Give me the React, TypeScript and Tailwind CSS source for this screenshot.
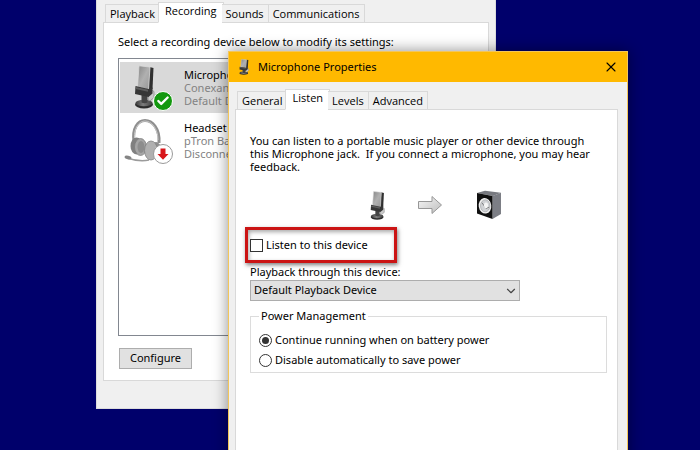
import { useState } from 'react';
import clsx from 'clsx';
import { Check, ChevronDown, X } from 'lucide-react';

interface TabsProps {
  items: string[];
  active: string;
}

interface Device {
  name: string;
  driver: string;
  status: string;
  icon: React.ReactNode;
}

const MicIcon = ({ className }: { className?: string }) => (
  <svg viewBox="0 0 21 44" preserveAspectRatio="none" className={className} aria-hidden="true">
    <defs>
      <linearGradient id="micHead" x1="0" y1="0" x2="1" y2="1">
        <stop offset="0" stopColor="#858585" />
        <stop offset="0.5" stopColor="#b0b0b0" />
        <stop offset="1" stopColor="#969696" />
      </linearGradient>
      <linearGradient id="micBase" x1="0" y1="0" x2="1" y2="0">
        <stop offset="0" stopColor="#3b3b3b" />
        <stop offset="0.45" stopColor="#7d7d7d" />
        <stop offset="1" stopColor="#3f3f3f" />
      </linearGradient>
    </defs>
    <ellipse cx="10" cy="39.500" rx="9" ry="4" fill="#2c2c2c" />
    <ellipse cx="10" cy="38" rx="8.500" ry="3.300" fill="url(#micBase)" />
    <path d="M7.500 30h6v7.500q-3 1.500-6 0z" fill="#444" />
    <path d="M14.500 28l4-2.500 1.500 1v6l-4 3.500-2-1z" fill="#cacaca" stroke="#777" strokeWidth="0.600" />
    <path d="M15.500 2l4 1L18.500 24l-4.500 1z" fill="#303030" />
    <path d="M5 .8l11 1.200-1.500 23L3.500 22z" fill="url(#micHead)" stroke="#dcdcdc" strokeWidth="0.800" />
    <path d="M1.500 21l13 3 4-1.500v6l-4 3.500-13.500-3z" fill="#363636" />
    <path d="M2 22l12 2.800v2L1.500 24z" fill="#5c5c5c" />
  </svg>
);

const HeadsetIcon = ({ className }: { className?: string }) => (
  <svg viewBox="0 0 40 44" className={className} aria-hidden="true">
    <path d="M10 24C8 10 14 2.500 21 2.500S36 10 35 25" fill="none" stroke="#8f8f8f" strokeWidth="3" />
    <path d="M10.500 20C10 10 15 3 21 3S34 10 34 22" fill="none" stroke="#c9c9c9" strokeWidth="1" />
    <path d="M3 40c6 2 14 4 22 2" fill="none" stroke="#9b9b9b" strokeWidth="1.400" />
    <ellipse cx="4" cy="39.500" rx="3.500" ry="1.800" fill="#858585" transform="rotate(12 4 39.500)" />
    <ellipse cx="12.500" cy="28" rx="6" ry="8.500" fill="#808080" />
    <ellipse cx="16.500" cy="29" rx="6" ry="8.500" fill="#a5a5a5" stroke="#7d7d7d" strokeWidth="0.800" />
    <ellipse cx="17" cy="29" rx="3.500" ry="6" fill="#8d8d8d" />
    <ellipse cx="32" cy="32" rx="5" ry="8" fill="#8e8e8e" />
    <ellipse cx="27" cy="32.500" rx="6.500" ry="9.500" fill="#b0b0b0" stroke="#808080" strokeWidth="0.800" />
  </svg>
);

const DownArrowIcon = () => (
  <svg viewBox="0 0 12 12" className="size-3" aria-hidden="true">
    <path d="M3.500.5h5V6H11.500L6 11.800.5 6h3z" fill="#d8161b" />
  </svg>
);

const ArrowIcon = () => (
  <svg viewBox="0 0 24 20" className="h-5 w-6" aria-hidden="true">
    <defs>
      <linearGradient id="arrow" x1="0" y1="0" x2="1" y2="1">
        <stop offset="0" stopColor="#f7f7f7" />
        <stop offset="1" stopColor="#bdbdbd" />
      </linearGradient>
    </defs>
    <path d="M.5 6.500H14V1.500L23.500 10 14 18.500V13.500H.5z" fill="url(#arrow)" stroke="#979797" />
  </svg>
);

const SpeakerIcon = () => (
  <svg viewBox="0 0 26 30" className="h-[30px] w-[26px]" aria-hidden="true">
    <path d="M1 3L9 .8l16 2-8 3.200z" fill="#77797f" />
    <path d="M16.500 6l8.500-3.200V24l-8.500 5z" fill="#7c7e85" />
    <path d="M1 3l15.500 3v23L1 23.500z" fill="#101010" />
    <ellipse cx="9" cy="15.800" rx="6.300" ry="7.800" fill="#f0f0f0" transform="rotate(-8 9 15.800)" />
    <ellipse cx="9.200" cy="15.800" rx="4.700" ry="6" fill="#d0d2d5" stroke="#9a9c9f" strokeWidth="0.600" />
    <path d="M6 12.800l4 5.500 3-1" fill="none" stroke="#777" strokeWidth="0.900" />
    <ellipse cx="10" cy="15.300" rx="2" ry="2.800" fill="#f5f5f5" />
  </svg>
);

const Tabs = ({ items, active }: TabsProps) => (
  <div role="tablist" className="relative z-10 -mb-px flex items-end px-0.5 font-['Open_Sans',sans-serif]">
    {items.map((item) => (
      <button
        key={item}
        role="tab"
        aria-selected={item === active}
        className={clsx(
          'border border-[#d9d9d9] leading-4',
          item === active
            ? '-mx-0.5 h-[21px] border-b-white bg-white px-1.5 pb-1'
            : 'h-[19px] border-l-0 bg-[#f0f0f0] px-1 first:border-l',
        )}
      >
        {item}
      </button>
    ))}
  </div>
);

const devices: Device[] = [
  {
    name: 'Microphone',
    driver: 'Conexant',
    status: 'Default Device',
    icon: (
      <>
        <MicIcon className="h-11 w-[21px]" />
        <span className="absolute right-0 bottom-0 flex size-5 items-center justify-center rounded-full border border-white bg-[#13980f]">
          <Check className="size-3.5 text-white" strokeWidth={4} />
        </span>
      </>
    ),
  },
  {
    name: 'Headset',
    driver: 'pTron Bass',
    status: 'Disconnected',
    icon: (
      <>
        <HeadsetIcon className="-ml-2.5 h-11 w-10" />
        <span className="absolute right-0 bottom-0 flex size-5 items-center justify-center rounded-full border border-[#9a9a9a] bg-white">
          <DownArrowIcon />
        </span>
      </>
    ),
  },
];

const SoundWindow = () => (
  <section className="absolute -top-8 left-24 flex h-[441px] w-[400px] flex-col border border-[#dcdcdc] bg-[#f0f0f0] px-1.5 pb-[27px]">
    <div className="h-[33px] shrink-0" />
    <Tabs items={['Playback', 'Recording', 'Sounds', 'Communications']} active="Recording" />
    <div className="flex flex-1 flex-col border border-[#d9d9d9] bg-white px-3.5 pt-[11px] pb-[11px]">
      <p className="leading-4">Select a recording device below to modify its settings:</p>
      <ul className="mt-2 flex-1 border border-[#828790] p-px pt-[3px]">
        {devices.map((device, i) => (
          <li
            key={device.name}
            className={clsx('mb-0.5 flex h-[51px] pt-[3px] pl-3.5', i === 0 && 'bg-[#d9d9d9]')}
          >
            <div className="relative h-[46px] w-[39px] shrink-0">{device.icon}</div>
            <div className="mt-[3px] ml-[11px] leading-[13px] text-[#838383]">
              <p className="text-black">{device.name}</p>
              <p>{device.driver}</p>
              <p>{device.status}</p>
            </div>
          </li>
        ))}
      </ul>
      <button className="mt-3 ml-px h-[21px] w-[73px] border border-[#adadad] bg-[#e1e1e1]">Configure</button>
    </div>
  </section>
);

const PropertiesWindow = () => {
  const [listen, setListen] = useState(false);
  const [power, setPower] = useState('continue');

  const powerOptions = [
    { id: 'continue', label: 'Continue running when on battery power' },
    { id: 'disable', label: 'Disable automatically to save power' },
  ];

  return (
    <section className="absolute top-[51px] -bottom-10 left-[228px] flex w-[400px] flex-col border border-[#f3c65a] bg-[#f0f0f0] shadow-[0_0_14px_rgba(0,0,0,0.45)]">
      <header className="flex h-[30px] shrink-0 items-center bg-[#ffb900] pr-2 pl-2.5">
        <MicIcon className="h-4 w-2.5" />
        <h1 className="ml-[9px] flex-1">Microphone Properties</h1>
        <button aria-label="Close">
          <X className="size-4" strokeWidth={1.600} />
        </button>
      </header>
      <div className="flex flex-1 flex-col px-1.5 pt-[7px] pr-[9px]">
        <Tabs items={['General', 'Listen', 'Levels', 'Advanced']} active="Listen" />
        <div className="flex-1 border border-[#d9d9d9] bg-white pt-6 pr-2.5 pl-3.5">
          <p className="leading-[13px]">
            You can listen to a portable music player or other device through
            <br />
            this Microphone jack.&nbsp; If you connect a microphone, you may hear
            <br />
            feedback.
          </p>
          <div className="mt-4 flex h-8 items-center pl-[120px]">
            <MicIcon className="h-[29px] w-[15px]" />
            <div className="ml-[33px]">
              <ArrowIcon />
            </div>
            <div className="ml-[34px]">
              <SpeakerIcon />
            </div>
          </div>
          <label className="mt-1.5 -ml-[5px] flex h-9 w-[152px] items-center gap-[3px] border-3 border-[#cb1414] pl-0.5 shadow-[1px_2px_4px_rgba(0,0,0,0.5),inset_1px_2px_4px_rgba(0,0,0,0.35)]">
            <input
              type="checkbox"
              checked={listen}
              onChange={(e) => setListen(e.target.checked)}
              className="size-[13px] appearance-none border border-[#333] bg-white checked:bg-[#333]"
            />
            Listen to this device
          </label>
          <label htmlFor="playback" className="block leading-[17px]">
            Playback through this device:
          </label>
          <div className="relative w-[270px]">
            <select
              id="playback"
              className="block h-[21px] w-full appearance-none border border-[#adadad] bg-[#e1e1e1] px-[3px]"
            >
              <option>Default Playback Device</option>
            </select>
            <ChevronDown className="pointer-events-none absolute top-1 right-0.5 size-3.5 text-[#444]" />
          </div>
          <fieldset className="mt-[7px] border border-[#dcdcdc] px-2 pt-1.5 pb-0.5">
            <legend className="px-0.5 leading-4">Power Management</legend>
            {powerOptions.map((option) => (
              <label key={option.id} className="flex h-5 items-center gap-[3px]">
                <input
                  type="radio"
                  name="power"
                  checked={power === option.id}
                  onChange={() => setPower(option.id)}
                  className="flex size-[13px] appearance-none items-center justify-center rounded-full border border-[#333] bg-white checked:before:size-[7px] checked:before:rounded-full checked:before:bg-[#333]"
                />
                {option.label}
              </label>
            ))}
          </fieldset>
        </div>
      </div>
    </section>
  );
};

const App = () => (
  <main className="relative h-screen overflow-hidden bg-[#00006b] font-['Noto_Sans',sans-serif] text-[11px] text-black">
    <SoundWindow />
    <PropertiesWindow />
  </main>
);

export default App;
